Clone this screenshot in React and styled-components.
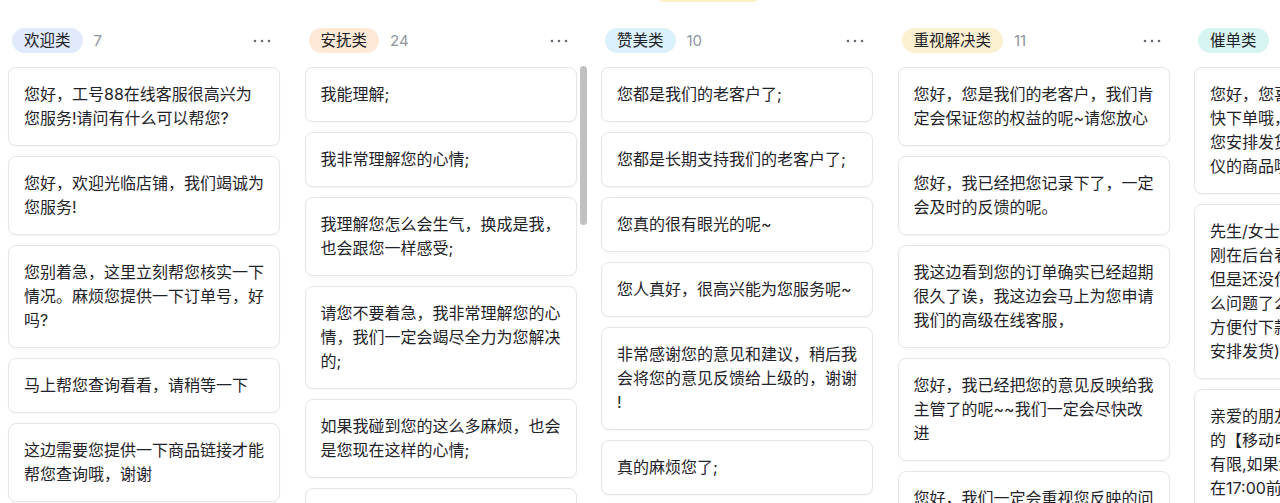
import React from "react";
import styled, { createGlobalStyle } from "styled-components";

const GlobalStyle = createGlobalStyle`
  html, body {
    margin: 0;
    padding: 0;
    background: #ffffff;
    overflow: hidden;
  }
  body {
    font-family: Inter, "Noto Sans CJK SC", "Noto Sans", sans-serif;
    color: #1f2329;
    -webkit-font-smoothing: antialiased;
  }
`;

const Page = styled.div`
  position: relative;
  width: 1280px;
  height: 503px;
  overflow: hidden;
  background: #fff;
`;

const TopNotch = styled.div`
  position: absolute;
  top: 0;
  left: 660px;
  width: 97px;
  height: 2px;
  border-radius: 0 0 4px 4px;
  background: #fdefc7;
`;

const Board = styled.div`
  display: flex;
  align-items: flex-start;
  gap: 24.5px;
  padding: 28px 0 0 8px;
`;

const Column = styled.section`
  position: relative;
  flex: 0 0 272px;
  width: 272px;
  display: flex;
  flex-direction: column;
`;

const Header = styled.div`
  display: flex;
  align-items: center;
  height: 25px;
  padding-left: 4px;
`;

const Tag = styled.span`
  display: inline-flex;
  align-items: center;
  height: 25px;
  padding: 0 12px;
  border-radius: 13px;
  background: ${(p) => p.$bg};
  color: #1f2329;
  font-size: 15.5px;
  line-height: 25px;
  white-space: nowrap;
`;

const Count = styled.span`
  margin-left: 11px;
  font-size: 15px;
  color: #8f959e;
`;

const MoreButton = styled.button`
  margin-left: auto;
  margin-right: 8px;
  width: 20px;
  height: 20px;
  padding: 0;
  border: none;
  background: transparent;
  display: flex;
  align-items: center;
  justify-content: center;
  color: #646a73;
  cursor: pointer;
`;

const CardList = styled.div`
  margin-top: 13.7px;
  display: flex;
  flex-direction: column;
  gap: 10px;
`;

const Card = styled.div`
  box-sizing: border-box;
  width: 272px;
  padding: 14.5px 15px;
  border: 1px solid #e4e6ea;
  border-radius: 8px;
  background: #fff;
  box-shadow: 0 1px 2px rgba(31, 35, 41, 0.04);
  font-size: 16px;
  line-height: 24px;
  color: #1f2329;
  line-break: anywhere;
  word-break: break-all;
`;

const ScrollThumb = styled.div`
  position: absolute;
  left: 275.5px;
  top: 38px;
  width: 6.5px;
  height: 159px;
  border-radius: 4px;
  background: #c1c1c1;
`;

const Dots = () => (
  <svg width="20" height="6" viewBox="0 0 20 6" fill="currentColor">
    <circle cx="3" cy="3" r="1.3" />
    <circle cx="10" cy="3" r="1.3" />
    <circle cx="17" cy="3" r="1.3" />
  </svg>
);

const columns = [
  {
    name: "欢迎类",
    count: 7,
    bg: "#e1e9fd",
    items: [
      "您好，工号88在线客服很高兴为您服务!请问有什么可以帮您?",
      "您好，欢迎光临店铺，我们竭诚为您服务!",
      "您别着急，这里立刻帮您核实一下情况。麻烦您提供一下订单号，好吗?",
      "马上帮您查询看看，请稍等一下",
      "这边需要您提供一下商品链接才能帮您查询哦，谢谢",
      "请问还有其他可以帮到您的吗?",
      "感谢您的耐心等待~",
    ],
  },
  {
    name: "安抚类",
    count: 24,
    bg: "#fde9d5",
    scroll: true,
    items: [
      "我能理解;",
      "我非常理解您的心情;",
      "我理解您怎么会生气，换成是我，也会跟您一样感受;",
      "请您不要着急，我非常理解您的心情，我们一定会竭尽全力为您解决的;",
      "如果我碰到您的这么多麻烦，也会是您现在这样的心情;",
      "您的心情我非常理解，请您放心，我们会给您一个满意的答复;",
    ],
  },
  {
    name: "赞美类",
    count: 10,
    bg: "#daf0fb",
    items: [
      "您都是我们的老客户了;",
      "您都是长期支持我们的老客户了;",
      "您真的很有眼光的呢~",
      "您人真好，很高兴能为您服务呢~",
      "非常感谢您的意见和建议，稍后我会将您的意见反馈给上级的，谢谢!",
      "真的麻烦您了;",
      "您真是太贴心了~",
    ],
  },
  {
    name: "重视解决类",
    count: 11,
    bg: "#fbf0d0",
    items: [
      "您好，您是我们的老客户，我们肯定会保证您的权益的呢~请您放心",
      "您好，我已经把您记录下了，一定会及时的反馈的呢。",
      "我这边看到您的订单确实已经超期很久了诶，我这边会马上为您申请我们的高级在线客服，",
      "您好，我已经把您的意见反映给我主管了的呢~~我们一定会尽快改进",
      "您好，我们一定会重视您反映的问题，尽快给您一个满意的答复",
    ],
  },
  {
    name: "催单类",
    count: 5,
    bg: "#d6f4f2",
    items: [
      "您好，您喜欢的话可以趁着活动尽快下单哦，我们这边会第一时间为您安排发货的，一定不会错过您心仪的商品哦~",
      "先生/女士，您好，我们小店这边刚在后台看到您已经拍下了宝贝，但是还没付款哦，请问是遇到了什么问题了么？如果没有问题的话，方便付下款哦(我们这边会尽快为安排发货)",
      "亲爱的朋友，您好，您在本店购买的【移动电源】目前库存数量比较有限,如果您需要的话，请您尽量在17:00前完成付款哦~",
    ],
  },
];

export default function App() {
  return (
    <>
      <GlobalStyle />
      <Page>
        <TopNotch />
        <Board>
          {columns.map((col) => (
            <Column key={col.name}>
              <Header>
                <Tag $bg={col.bg}>{col.name}</Tag>
                <Count>{col.count}</Count>
                <MoreButton aria-label="更多">
                  <Dots />
                </MoreButton>
              </Header>
              <CardList>
                {col.items.map((t, i) => (
                  <Card key={i}>{t}</Card>
                ))}
              </CardList>
              {col.scroll && <ScrollThumb />}
            </Column>
          ))}
        </Board>
      </Page>
    </>
  );
}
